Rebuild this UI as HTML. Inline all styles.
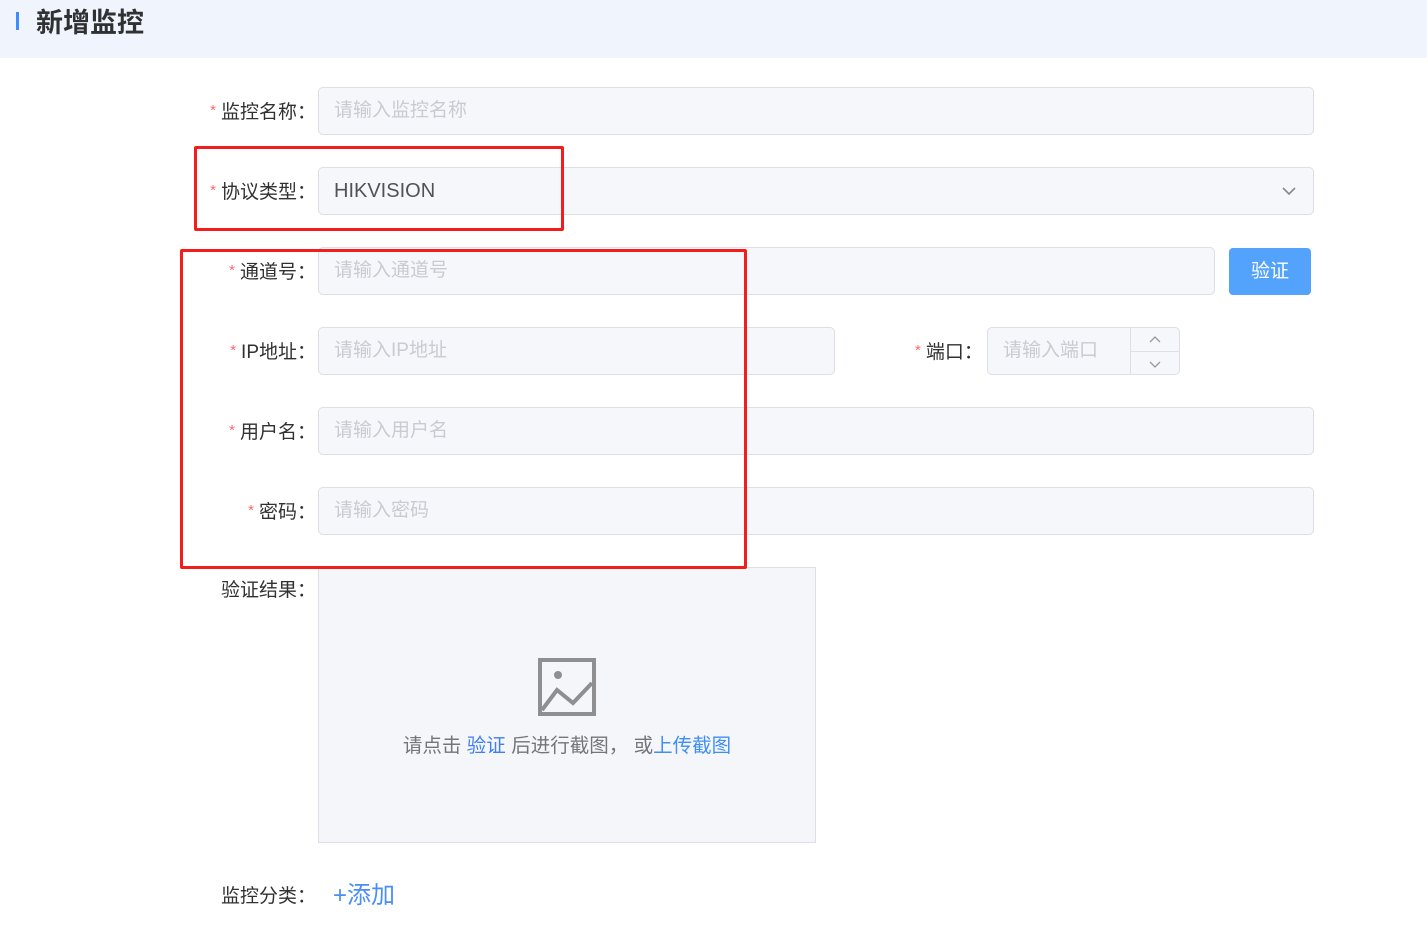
<!DOCTYPE html>
<html><head><meta charset="utf-8"><style>
body{margin:0;width:1427px;height:946px;background:#fff;position:relative;overflow:hidden;font-family:"Liberation Sans","Noto Sans CJK SC",sans-serif}
.a{position:absolute}
.hd{left:0;top:0;width:1427px;height:58px;background:#eff4fd}
.lbl{position:absolute;right:1111px;font-size:19px;color:#303133;line-height:48px;white-space:nowrap}
.lbl i{color:#f56c6c;font-style:normal;font-size:15px;margin-right:5px;vertical-align:3px}
.in{position:absolute;left:318px;background:#f5f7fa;border:1px solid #dcdfe6;border-radius:5px;font-size:19px;color:#c8cbd1;line-height:46px;padding-left:15px;box-sizing:border-box;height:48px}
.red{position:absolute;border:3px solid #f31d1d;border-radius:2px}
</style></head><body>
<div class="a hd"></div>
<div class="a" style="left:16px;top:12px;width:3px;height:18px;background:#3d8bfd"></div>
<div class="a" style="left:36px;top:5px;font-size:27px;font-weight:bold;color:#303133;line-height:36px">新增监控</div>

<div class="lbl" style="top:87px"><i>*</i>监控名称：</div>
<div class="in" style="top:87px;width:996px">请输入监控名称</div>

<div class="lbl" style="top:167px"><i>*</i>协议类型：</div>
<div class="in" style="top:167px;width:996px;color:#505256;font-size:20px">HIKVISION
<svg class="a" style="right:16px;top:17px" width="16" height="12" viewBox="0 0 16 12"><path d="M2 3l6 6 6-6" fill="none" stroke="#888" stroke-width="1.6"/></svg></div>

<div class="lbl" style="top:247px"><i>*</i>通道号：</div>
<div class="in" style="top:247px;width:897px">请输入通道号</div>
<div class="a" style="left:1229px;top:248px;width:82px;height:47px;background:#53a3fd;border-radius:4px;color:#fff;font-size:19px;line-height:47px;text-align:center">验证</div>

<div class="lbl" style="top:327px"><i>*</i>IP地址：</div>
<div class="in" style="top:327px;width:517px">请输入IP地址</div>
<div class="a" style="left:915px;top:327px;font-size:19px;color:#303133;line-height:48px"><i style="color:#f56c6c;font-style:normal;font-size:15px;margin-right:5px;vertical-align:3px">*</i>端口：</div>
<div class="in" style="left:987px;top:327px;width:193px">请输入端口
<div class="a" style="left:142px;top:0;width:1px;height:46px;background:#dcdfe6"></div>
<div class="a" style="left:143px;top:23px;width:49px;height:1px;background:#dcdfe6"></div>
<svg class="a" style="left:161px;top:8px" width="12" height="8"><path d="M1 6l5-5 5 5" fill="none" stroke="#999" stroke-width="1.3"/></svg>
<svg class="a" style="left:161px;top:32px" width="12" height="8"><path d="M1 2l5 5 5-5" fill="none" stroke="#999" stroke-width="1.3"/></svg>
</div>

<div class="lbl" style="top:407px"><i>*</i>用户名：</div>
<div class="in" style="top:407px;width:996px">请输入用户名</div>

<div class="lbl" style="top:487px"><i>*</i>密码：</div>
<div class="in" style="top:487px;width:996px">请输入密码</div>

<div class="lbl" style="top:567px">验证结果：</div>
<div class="a" style="left:318px;top:567px;width:496px;height:274px;background:#f5f6f9;border:1px solid #dcdfe6"></div>
<svg class="a" style="left:538px;top:658px" width="58" height="58" viewBox="0 0 58 58"><rect x="2" y="2" width="54" height="54" fill="none" stroke="#8f8f92" stroke-width="4"/><circle cx="20" cy="17" r="4" fill="#8f8f92"/><path d="M4 52l15-20 16 13 19-20" fill="none" stroke="#8f8f92" stroke-width="4"/></svg>
<div class="a" style="left:318px;top:734px;width:498px;text-align:center;font-size:19.5px;color:#737579;line-height:24px;white-space:nowrap">请点击 <span style="color:#3f7ff5">验证</span> 后进行截图，&nbsp;或<span style="color:#3f8ff5">上传截图</span></div>

<div class="lbl" style="top:873px">监控分类：</div>
<div class="a" style="left:333px;top:881px;font-size:24px;color:#4a8ef6;line-height:30px">+添加</div>

<div class="red" style="left:194px;top:146px;width:364px;height:79px"></div>
<div class="red" style="left:180px;top:249px;width:561px;height:314px"></div>
</body></html>
